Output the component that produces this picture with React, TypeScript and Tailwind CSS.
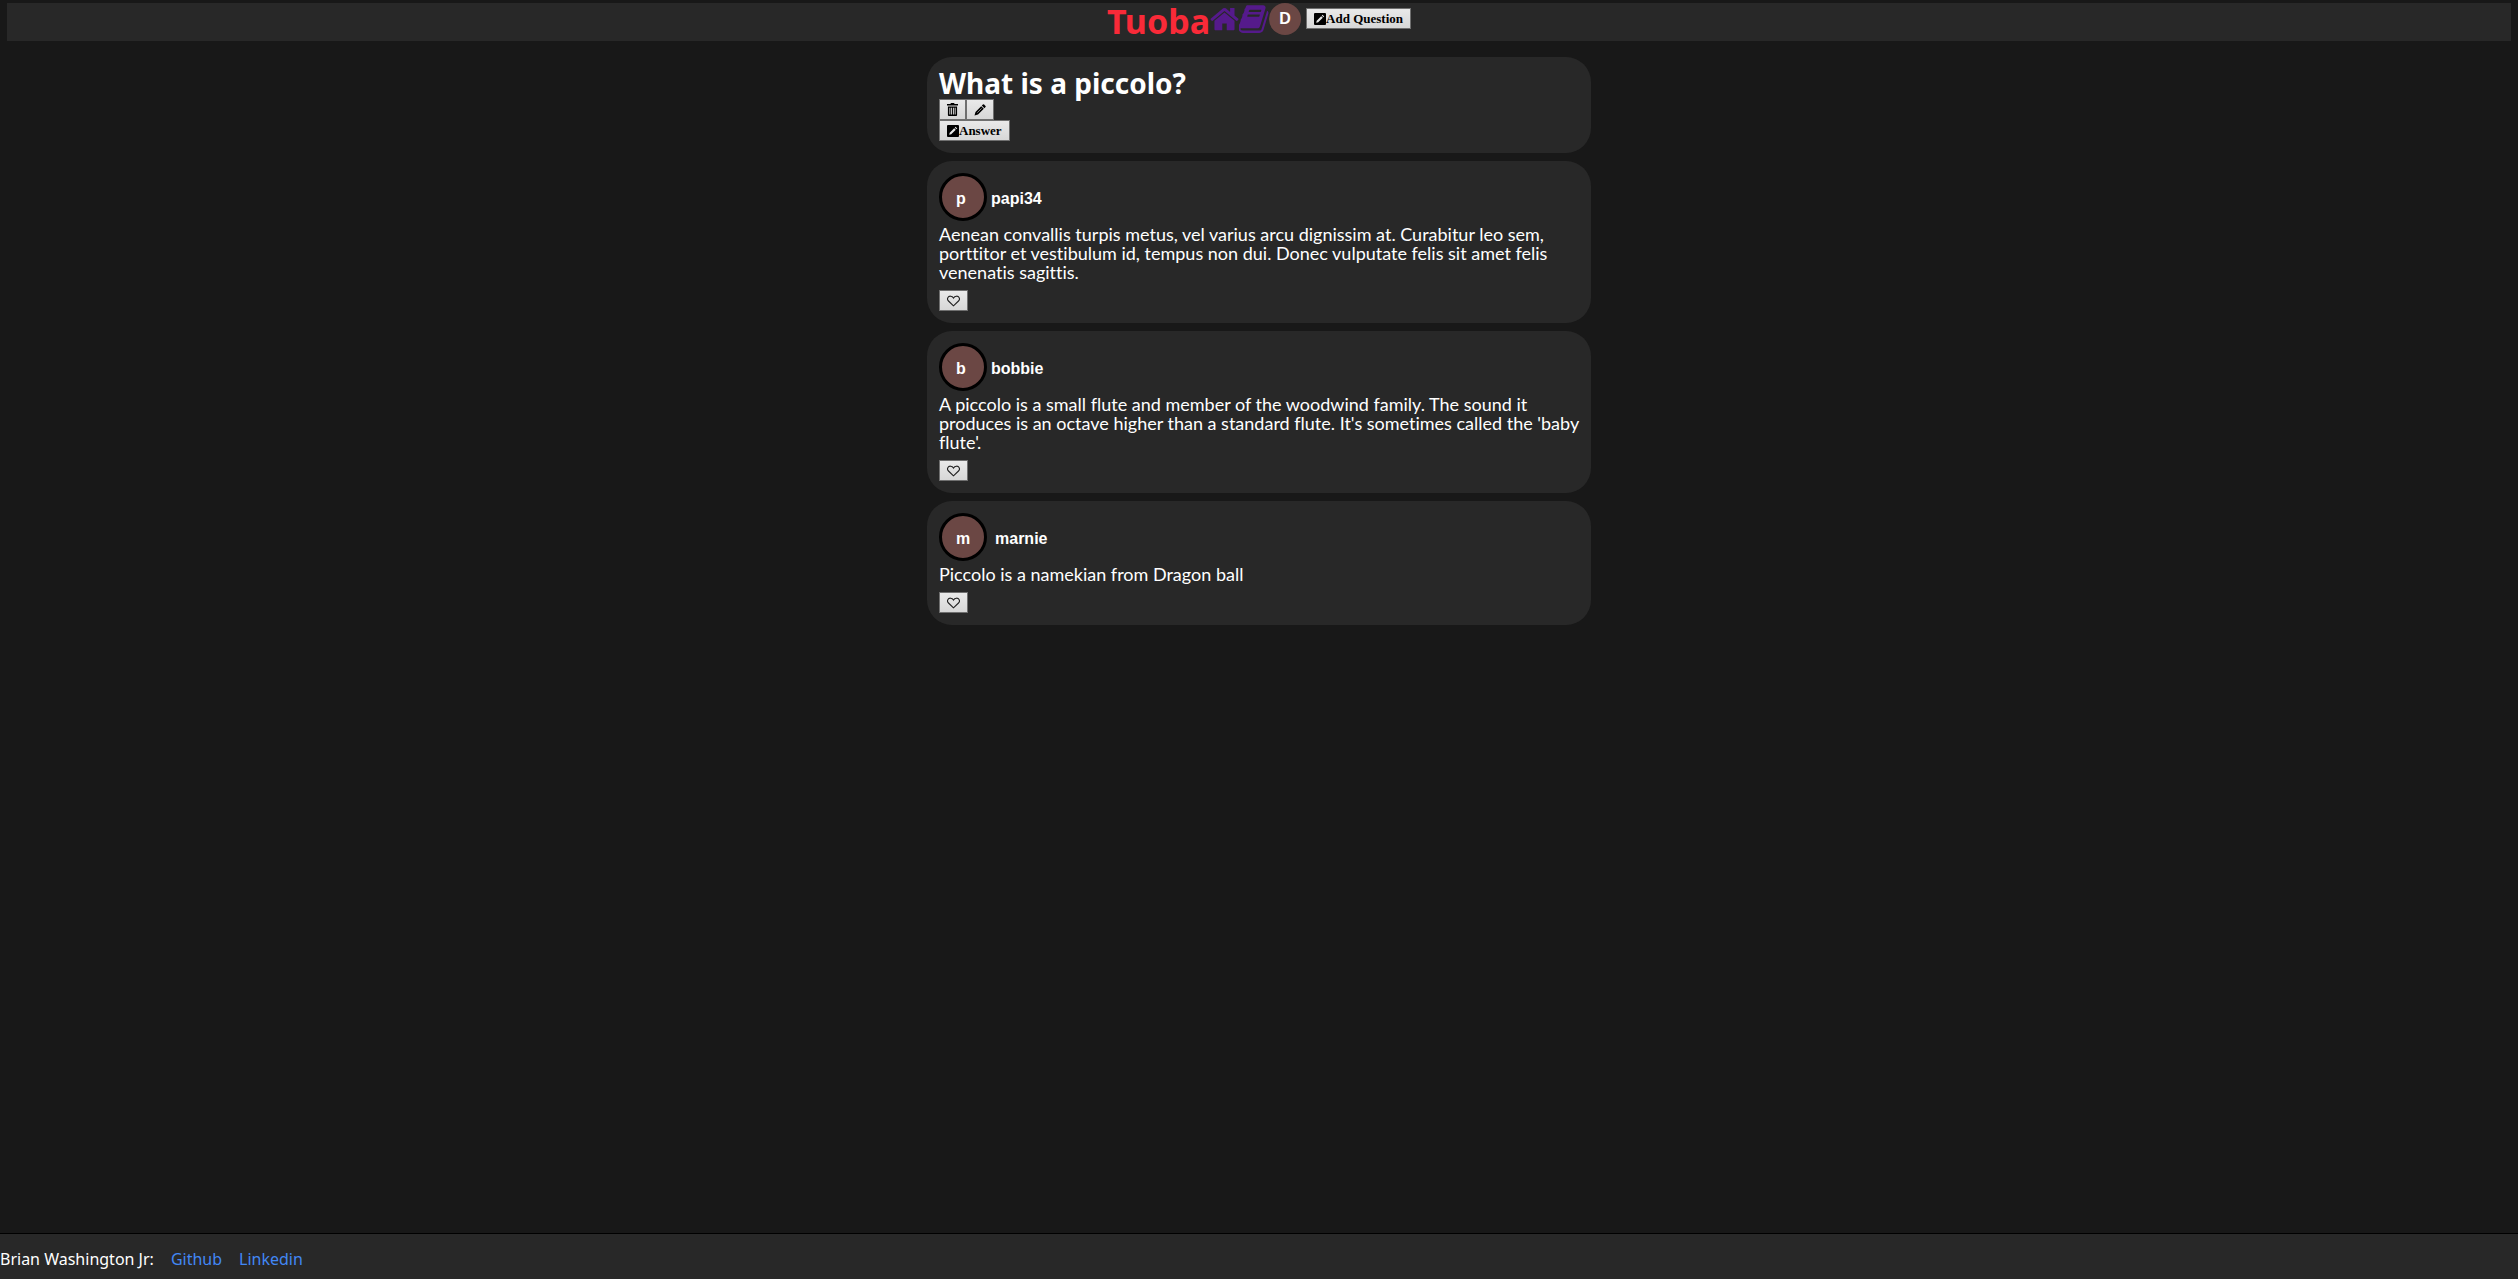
import type { ReactNode } from "react";

function HomeIcon() {
  return (
    <svg viewBox="64 240 1664 1300" className="h-6 w-[29px]" fill="currentColor" aria-hidden="true">
      <path d="M1472 992v480q0 26-19 45t-45 19h-384v-384h-256v384h-384q-26 0-45-19t-19-45v-480q0-1 .5-3t.5-3l575-474 575 474q1 2 1 6zm223-69l-62 74q-8 9-21 11h-3q-13 0-21-7l-692-577-692 577q-12 8-24 7-13-2-21-11l-62-74q-8-10-7-23.5t11-21.5l719-599q32-26 76-26t76 26l244 204v-195q0-14 9-23t23-9h192q14 0 23 9t9 23v408l219 182q10 8 11 21.5t-7 23.5z" />
    </svg>
  );
}

function BookIcon() {
  return (
    <svg viewBox="60 120 1610 1550" className="h-7 w-[30px]" fill="currentColor" aria-hidden="true">
      <path d="M1639 478q40 57 18 129l-275 906q-19 64-76.5 107.5t-122.500 43.500h-923q-77 0-148.500-53.500t-99.500-131.500q-24-67-2-127 0-4 3-27t4-37q1-8-3-21.500t-3-19.500q2-11 8-21t16.500-23.500 16.500-23.500q23-38 45-91.500t30-91.500q3-10 .5-30t-.5-28q3-11 17-28t17-23q21-36 42-92t25-90q1-9-2.500-32t.5-28q4-13 22-30.500t22-22.500q19-26 42.500-84.500t27.500-96.500q1-8-3-25.500t-2-26.500q2-8 9-18t18-23 17-21q8-12 16.500-30.500t15-35 16-36 19.500-32 26.500-23.500 36-11.500 47.500 5.500l-1 3q38-9 51-9h761q74 0 114 56t18 130l-274 906q-36 119-71.500 153.500t-128.500 34.500h-869q-27 0-38 15-11 16-1 43 24 70 144 70h923q29 0 56-15.500t35-41.500l300-987q7-22 5-57 38 15 59 43zm-1064 2q-4 13 2 22.500t20 9.500h608q13 0 25.500-9.500t16.500-22.500l21-64q4-13-2-22.500t-20-9.500h-608q-13 0-25.500 9.500t-16.500 22.500zm-83 256q-4 13 2 22.500t20 9.500h608q13 0 25.500-9.500t16.500-22.500l21-64q4-13-2-22.500t-20-9.500h-608q-13 0-25.500 9.500t-16.500 22.500z" />
    </svg>
  );
}

function TrashIcon() {
  return (
    <svg viewBox="0 0 12 14" className="h-[13px] w-[11px]" fill="currentColor" aria-hidden="true">
      <path d="M4 0h4v1h4v1.600H0V1h4zM1 3.600h10V13a1 1 0 0 1-1 1H2a1 1 0 0 1-1-1zM2.600 5v7.500h1V5zM4.500 5v7.500h1V5zM6.500 5v7.500h1V5zM8.400 5v7.500h1V5z" fillRule="evenodd" />
    </svg>
  );
}

function PencilIcon() {
  return (
    <svg viewBox="0 0 12 12" className="size-3" fill="currentColor" aria-hidden="true">
      <path d="M8.900.500a.9.900 0 0 1 1.200 0l1.400 1.400a.9.900 0 0 1 0 1.200l-1.100 1.100L7.800 1.600zM7.200 2.200l2.600 2.600-5.800 5.700L.5 11.500l1-3.600z" />
      <path d="M3.300 8.700 7.600 4.400" stroke="#e0e0e0" strokeWidth=".6" />
    </svg>
  );
}

function EditIcon() {
  return (
    <svg viewBox="0 0 12 12" className="size-3" fill="currentColor" aria-hidden="true">
      <rect width="12" height="12" rx="1" />
      <path d="M8.600 1.800 10.200 3.400 9.400 4.200 7.800 2.600zM7.200 3.200 8.800 4.800 4.200 9.200 2.200 9.800 2.700 7.700z" fill="#e8e8e8" />
    </svg>
  );
}

function HeartIcon() {
  return (
    <svg viewBox="0 0 14 12" className="h-3 w-[13px]" fill="none" stroke="#222" strokeWidth="1.200" aria-hidden="true">
      <path d="M7 11.200 1.600 6A3.100 3.100 0 0 1 1 2.200C2 .300 5.600.200 7 2.800 8.400.200 12 .300 13 2.200A3.100 3.100 0 0 1 12.400 6z" />
    </svg>
  );
}

function Button({ label, children }: { label?: string; children: ReactNode }) {
  return (
    <button
      type="button"
      aria-label={label}
      className="flex h-[21px] items-center border border-[#6f6f6f] bg-linear-to-b from-[#e9e9e9] to-[#d7d7d7] px-[7px] font-['Liberation_Serif',serif] text-[13px] font-bold leading-none text-black"
    >
      {children}
    </button>
  );
}

function Card({ children }: { children: ReactNode }) {
  return <section className="rounded-[25px] bg-[#282828] p-3">{children}</section>;
}

const answers = [
  {
    user: "papi34",
    nameGap: "ml-1",
    text: "Aenean convallis turpis metus, vel varius arcu dignissim at. Curabitur leo sem, porttitor et vestibulum id, tempus non dui. Donec vulputate felis sit amet felis venenatis sagittis.",
  },
  {
    user: "bobbie",
    nameGap: "ml-1",
    text: "A piccolo is a small flute and member of the woodwind family. The sound it produces is an octave higher than a standard flute. It's sometimes called the 'baby flute'.",
  },
  { user: "marnie", nameGap: "ml-2", text: "Piccolo is a namekian from Dragon ball" },
];

function Answer({ user, nameGap, text }: { user: string; nameGap: string; text: string }) {
  return (
    <Card>
      <div className="flex items-center font-['Liberation_Sans',sans-serif] text-base font-bold">
        <span className="flex size-12 items-center rounded-full border-3 border-black bg-[#6b4744] pt-1 pl-3.5">
          {user[0]}
        </span>
        <span className={"pt-1 " + nameGap}>{user}</span>
      </div>
      <p className="mt-1 -mr-2 mb-2 leading-[19px] [font-variant-ligatures:none]">{text}</p>
      <Button label={"Like answer by " + user}>
        <HeartIcon />
      </Button>
    </Card>
  );
}

export default function App() {
  return (
    <div className="flex min-h-screen flex-col bg-[#181818] font-['Lato','Noto_Sans',sans-serif] text-[18px] text-white">
      <header className="mx-[7px] mt-[3px] flex h-[38px] items-start justify-center bg-[#282828]">
        <h1 className="font-['Noto_Sans',sans-serif] text-[34px] font-bold leading-[36px] text-[#f92a38]">Tuoba</h1>
        <a href="#home" aria-label="Home" className="pt-1 text-[#551a8b]"><HomeIcon /></a>
        <a href="#questions" aria-label="Questions" className="pt-0.5 text-[#551a8b]"><BookIcon /></a>
        <span className="flex size-8 items-center justify-center rounded-full bg-[#6b4744] font-['Liberation_Sans',sans-serif] text-base font-bold">D</span>
        <div className="ml-[5px] pt-[5px]">
          <Button><EditIcon />Add Question</Button>
        </div>
      </header>
      <main className="mx-auto mt-4 flex w-[664px] max-w-full flex-1 flex-col gap-2">
        <Card>
          <h2 className="mb-0.5 font-['Noto_Sans',sans-serif] text-[28px] font-bold leading-[28px]">What is a piccolo?</h2>
          <div className="flex">
            <Button label="Delete question"><TrashIcon /></Button>
            <Button label="Edit question"><PencilIcon /></Button>
          </div>
          <Button><EditIcon />Answer</Button>
        </Card>
        {answers.map((a) => <Answer key={a.user} {...a} />)}
      </main>
      <footer className="flex h-[46px] items-center gap-[17px] border-t border-black bg-[#282828] pt-1 font-['Noto_Sans',sans-serif] text-base">
        <span>Brian Washington Jr:</span>
        <a href="#github" className="text-[#4287f5]">Github</a>
        <a href="#linkedin" className="text-[#4287f5]">Linkedin</a>
      </footer>
    </div>
  );
}
